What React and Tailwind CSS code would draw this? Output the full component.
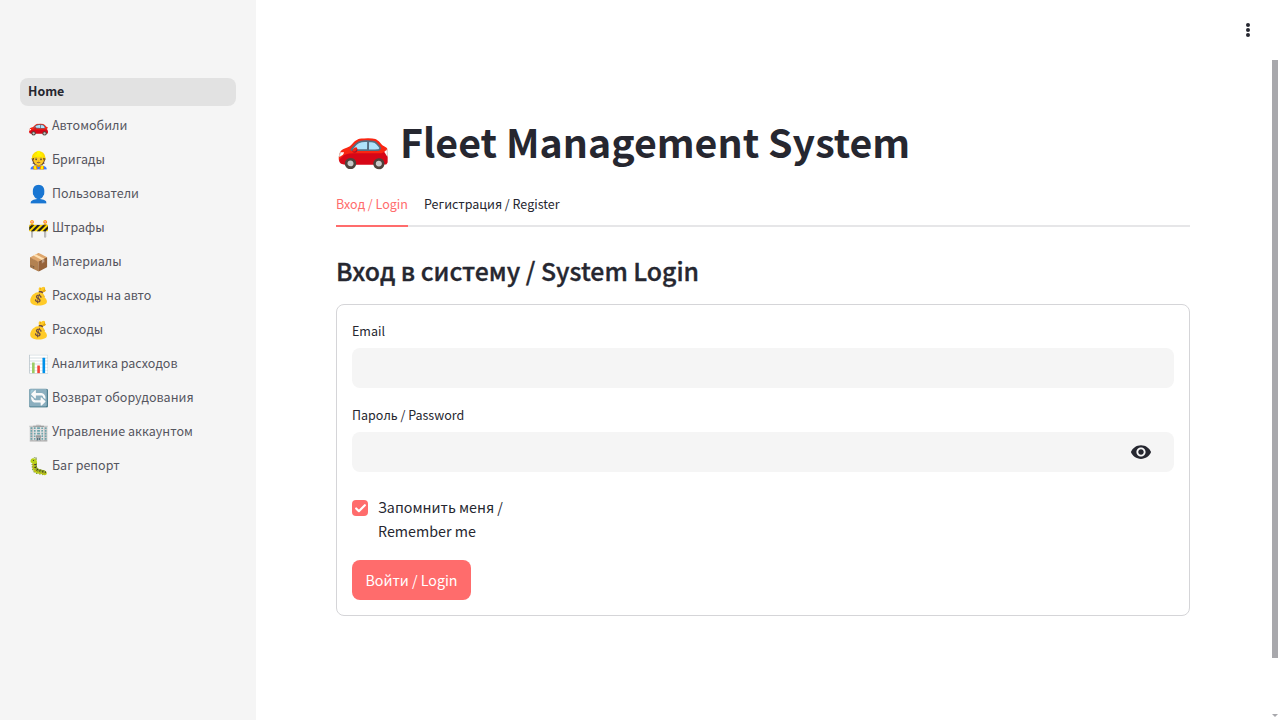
import { Check } from "lucide-react";

const fontStack = "font-['Noto_Sans_CJK_SC','Noto_Sans',sans-serif]";

const navItems = [
  { icon: "🚗", label: "Автомобили" },
  { icon: "👷", label: "Бригады" },
  { icon: "👤", label: "Пользователи" },
  { icon: "🚧", label: "Штрафы" },
  { icon: "📦", label: "Материалы" },
  { icon: "💰", label: "Расходы на авто" },
  { icon: "💰", label: "Расходы" },
  { icon: "📊", label: "Аналитика расходов" },
  { icon: "🔄", label: "Возврат оборудования" },
  { icon: "🏢", label: "Управление аккаунтом" },
  { icon: "🐛", label: "Баг репорт" },
];

const Sidebar = () => (
  <aside className="w-[256px] shrink-0 bg-[#f5f5f5] px-5 pt-[78px]">
    <nav className="flex flex-col gap-[6px]">
      <a className="flex h-[28px] items-center rounded-lg bg-[#e2e2e2] px-2 pb-[1px] text-[12.4px] font-bold text-[#262730]">
        Home
      </a>
      {navItems.map((item) => (
        <a
          key={item.label}
          className="flex h-[28px] items-center px-2 text-[12.5px] text-[#55565f]"
        >
          <span className="flex h-[28px] w-[24px] items-center pb-[4px] text-[17px] leading-none">
            {item.icon}
          </span>
          <span className="pb-[1px]">{item.label}</span>
        </a>
      ))}
    </nav>
  </aside>
);

const Field = ({ label, children }) => (
  <div className="flex flex-col">
    <label className="mb-[6px] h-[22px] text-[12.5px] leading-[22px] text-[#262730]">
      {label}
    </label>
    {children}
  </div>
);

const LoginForm = () => (
  <form className="flex flex-col rounded-lg border border-[#d5d5d8] p-[15px]">
    <Field label="Email">
      <div className="h-[40px] rounded-lg bg-[#f5f5f5]" />
    </Field>
    <div className="mt-4">
      <Field label="Пароль / Password">
        <div className="flex h-[40px] items-center justify-end rounded-lg bg-[#f5f5f5] pr-[22px]">
          <svg width="22" height="22" viewBox="0 0 24 24" fill="#262730">
            <path d="M12 4.5C7 4.5 2.73 7.61 1 12c1.73 4.39 6 7.5 11 7.5s9.27-3.11 11-7.5c-1.73-4.39-6-7.5-11-7.5zM12 17c-2.76 0-5-2.24-5-5s2.24-5 5-5 5 2.24 5 5-2.24 5-5 5zm0-8c-1.66 0-3 1.34-3 3s1.34 3 3 3 3-1.34 3-3-1.34-3-3-3z" />
          </svg>
        </div>
      </Field>
    </div>
    <div className="mt-[23px] flex items-start gap-[10px]">
      <span className="mt-[5px] flex h-4 w-4 items-center justify-center rounded bg-[#ff6c6c]">
        <Check size={13} strokeWidth={4} color="#fff" />
      </span>
      <span className="w-[140px] text-[14.3px] leading-[24px] text-[#262730]">
        Запомнить меня / Remember me
      </span>
    </div>
    <button
      type="button"
      className="mt-[17px] h-[40px] w-[119px] rounded-lg bg-[#ff6c6c] text-[14.25px] text-white"
    >
      Войти / Login
    </button>
  </form>
);

export default function App() {
  return (
    <div className={`relative flex h-[720px] w-[1280px] overflow-hidden bg-white ${fontStack}`}>
      <Sidebar />
      <main className="flex-1 pl-[80px] pr-[90px] pt-[114px]">
        <h1 className="flex h-[54px] items-center text-[39.3px] font-bold leading-[54px] text-[#262730]">
          <span className="mr-[9px] text-[44px]">🚗</span>
          Fleet Management System
        </h1>
        <div className="mt-[22px] flex h-[37px] items-start gap-4 border-b-2 border-[#e6e6e8] text-[12.5px]">
          <button className="h-[37px] border-b-2 border-[#ff6c6c] pb-[6px] text-[#ff6c6c]">
            Вход / Login
          </button>
          <button className="h-[35px] pb-[6px] text-[#262730]">Регистрация / Register</button>
        </div>
        <h2 className="mb-[14px] mt-[23px] h-[40px] text-[24.8px] font-medium leading-[40px] text-[#262730] [-webkit-text-stroke:0.35px_#262730]">
          Вход в систему / System Login
        </h2>
        <LoginForm />
      </main>

      {/* main menu dots */}
      <svg className="absolute left-[1238px] top-[20px]" width="20" height="20" viewBox="0 0 20 20" fill="#262730">
        <circle cx="10" cy="5" r="2" />
        <circle cx="10" cy="10" r="2" />
        <circle cx="10" cy="15" r="2" />
      </svg>

      {/* page scrollbar */}
      <div className="absolute left-[1272px] top-[60px] h-[598px] w-[6px] bg-[#a8a8ac]" />
      <div className="absolute left-[1272px] top-[714px] h-0 w-0 border-x-[3px] border-t-[3px] border-x-transparent border-t-[#a8a8ac]" />
    </div>
  );
}
